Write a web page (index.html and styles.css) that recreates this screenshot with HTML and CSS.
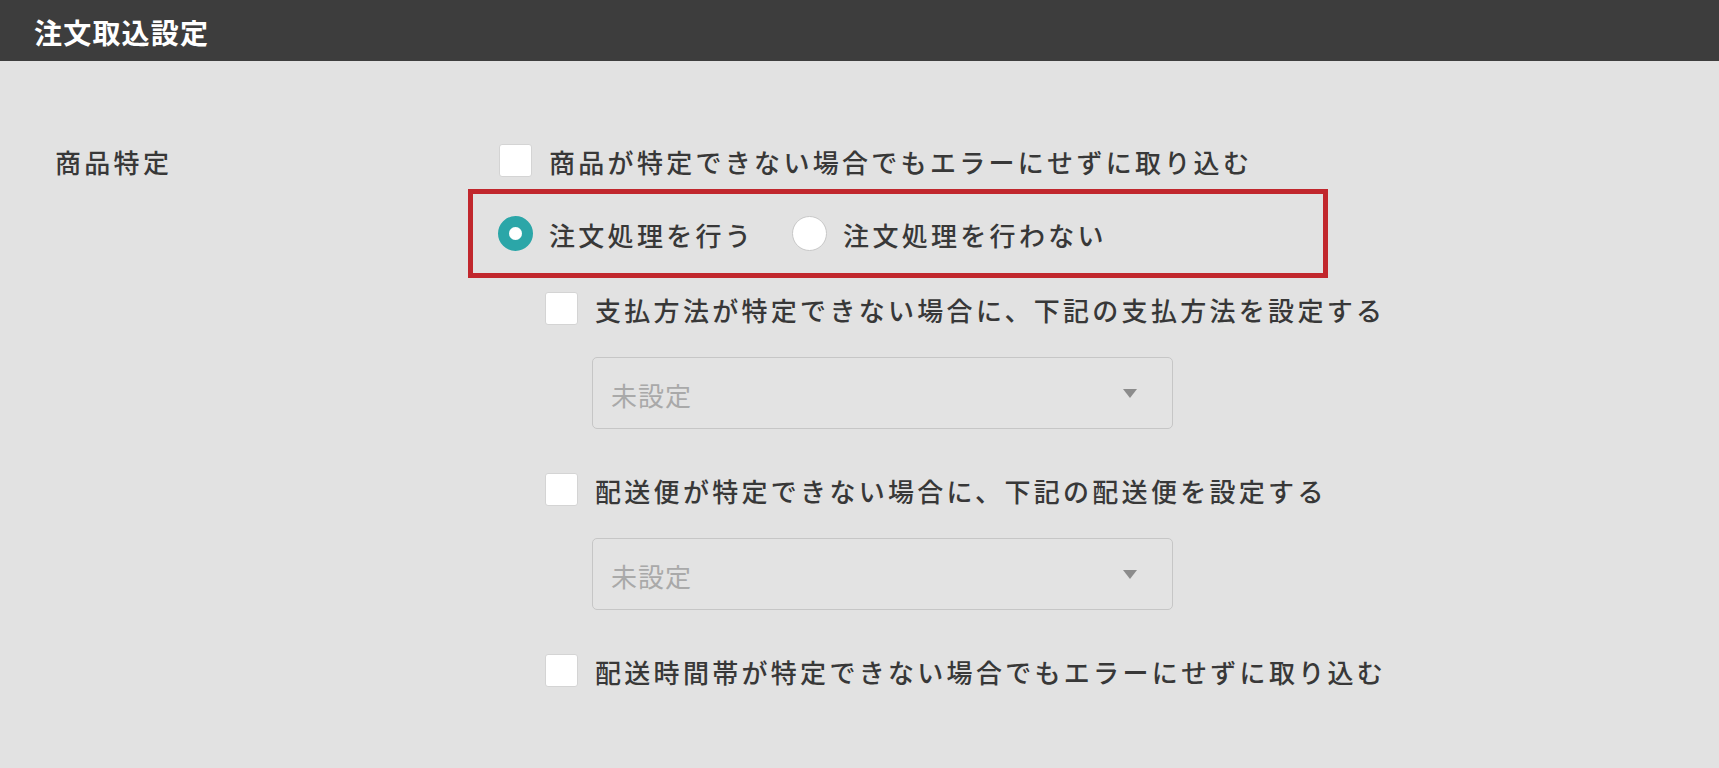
FILE: index.html
```html
<!DOCTYPE html>
<html lang="ja">
<head>
<meta charset="utf-8">
<title>注文取込設定</title>
<link rel="stylesheet" href="styles.css">
</head>
<body>
<header class="header"><h1 class="title">注文取込設定</h1></header>
<main class="content">
  <div class="label">商品特定</div>
  <div class="controls">
    <div class="row">
      <span class="checkbox"></span>
      <span class="text">商品が特定できない場合でもエラーにせずに取り込む</span>
    </div>
    <div class="highlight">
      <div class="row">
        <span class="radio checked"></span>
        <span class="text">注文処理を行う</span>
      </div>
      <div class="row radio-second">
        <span class="radio"></span>
        <span class="text">注文処理を行わない</span>
      </div>
    </div>
    <div class="sub">
      <div class="row">
        <span class="checkbox"></span>
        <span class="text">支払方法が特定できない場合に、下記の支払方法を設定する</span>
      </div>
      <div class="select">
        <span class="select-text">未設定</span>
        <svg class="arrow" width="14" height="9" viewBox="0 0 14 9"><path d="M0 0H14L7 9Z" fill="#8c8c8c"/></svg>
      </div>
      <div class="row row-gap">
        <span class="checkbox"></span>
        <span class="text">配送便が特定できない場合に、下記の配送便を設定する</span>
      </div>
      <div class="select">
        <span class="select-text">未設定</span>
        <svg class="arrow" width="14" height="9" viewBox="0 0 14 9"><path d="M0 0H14L7 9Z" fill="#8c8c8c"/></svg>
      </div>
      <div class="row row-gap">
        <span class="checkbox"></span>
        <span class="text">配送時間帯が特定できない場合でもエラーにせずに取り込む</span>
      </div>
    </div>
  </div>
</main>
</body>
</html>
```
FILE: styles.css
```css
html, body {
  margin: 0;
  padding: 0;
}
body {
  background: #e2e2e2;
  font-family: "Noto Sans CJK JP", "Noto Sans", sans-serif;
  color: #383838;
  min-height: 768px;
}
.header {
  height: 61px;
  background: #3d3d3d;
  display: flex;
  align-items: center;
  padding-left: 34px;
  box-sizing: border-box;
}
.title {
  margin: 0;
  font-size: 28px;
  font-weight: 700;
  letter-spacing: 1.2px;
  color: #ffffff;
  line-height: 1;
  padding-top: 2px;
}
.content {
  display: grid;
  grid-template-columns: 444px 1fr;
  padding: 83px 0 0 55px;
}
.label {
  font-size: 26px;
  font-weight: 500;
  letter-spacing: 3.3px;
  line-height: 33px;
  padding-top: 1px;
}
.controls {
  display: flex;
  flex-direction: column;
  align-items: flex-start;
}
.row {
  display: flex;
  align-items: center;
  height: 33px;
}
.text {
  font-size: 26px;
  font-weight: 500;
  letter-spacing: 3.3px;
  line-height: 33px;
  white-space: nowrap;
  padding-top: 1px;
}
.checkbox {
  width: 33px;
  height: 33px;
  box-sizing: border-box;
  background: #ffffff;
  border: 1px solid #d4d4d4;
  border-radius: 3px;
  margin-right: 17px;
  flex: none;
}
.highlight {
  margin-top: 12px;
  margin-left: -31px;
  width: 860px;
  height: 89px;
  box-sizing: border-box;
  border: 5px solid #c1272d;
  display: flex;
  align-items: center;
  padding: 0 0 0 25px;
}
.highlight .row {
  height: 35px;
}
.radio {
  width: 35px;
  height: 35px;
  box-sizing: border-box;
  border-radius: 50%;
  background: #ffffff;
  border: 1px solid #c8c8c8;
  margin-right: 16px;
  flex: none;
}
.radio.checked {
  background: #2ba6a8;
  border: 11px solid #2ba6a8;
  background-clip: padding-box;
  position: relative;
}
.radio.checked::after {
  content: "";
  position: absolute;
  inset: 0;
  border-radius: 50%;
  background: #ffffff;
}
.radio-second {
  margin-left: 38px;
}
.sub {
  margin-top: 14px;
  margin-left: 46px;
  display: flex;
  flex-direction: column;
}
.select {
  margin-top: 32px;
  margin-left: 47px;
  width: 581px;
  height: 72px;
  box-sizing: border-box;
  border: 1px solid #c6c6c6;
  border-radius: 5px;
  background: #e3e3e3;
  display: flex;
  align-items: center;
  justify-content: space-between;
  padding: 0 35px 0 18px;
}
.select-text {
  font-size: 26px;
  letter-spacing: 1px;
  color: #a9a9a9;
  line-height: 33px;
  padding-top: 3px;
}
.arrow {
  display: block;
  flex: none;
}
.row-gap {
  margin-top: 44px;
}
```
